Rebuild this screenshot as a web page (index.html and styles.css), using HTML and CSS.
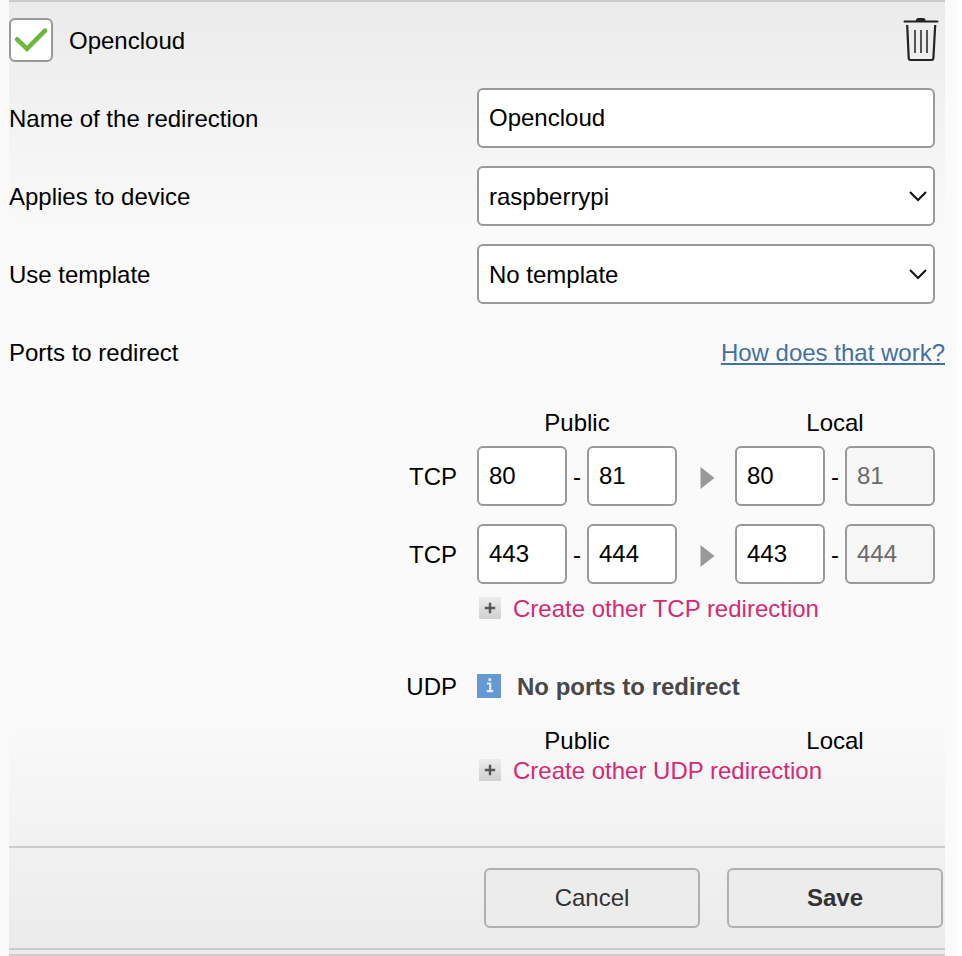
FILE: index.html
```html
<!DOCTYPE html>
<html lang="en">
<head>
<meta charset="utf-8">
<title>Port redirection</title>
<link rel="stylesheet" href="styles.css">
</head>
<body>
<main class="page">
<form class="panel">
  <header class="head">
    <span class="check"><svg width="34" height="26" viewBox="0 0 34 26"><path d="M3.2 12.3 13 21.8 31 3.6" fill="none" stroke="#6cb83c" stroke-width="4.6" stroke-linecap="round"/></svg></span>
    <span class="title">Opencloud</span>
    <svg class="trash" width="36" height="45" viewBox="0 0 36 45" fill="none">
      <path d="M13 4V3Q13 1 15.5 1H20Q22.5 1 22.5 3V4Z" fill="#222"/>
      <path d="M1.6 4.5H34.4" stroke="#222" stroke-width="2.2" stroke-linecap="round"/>
      <path d="M4.2 8 5.7 41Q5.8 43 7.7 43H28.5Q30.3 43 30.4 41L32.2 8" stroke="#222" stroke-width="2.2"/>
      <path d="M12 13V36M18 13V36M24 13V36" stroke="#555" stroke-width="2"/>
    </svg>
  </header>
  <div class="row"><span class="label">Name of the redirection</span><span class="field wide">Opencloud</span></div>
  <div class="row"><span class="label">Applies to device</span><span class="field wide select">raspberrypi<svg width="20" height="12" viewBox="0 0 20 12"><path d="M2 2 10 10 18 2" fill="none" stroke="#111" stroke-width="2"/></svg></span></div>
  <div class="row"><span class="label">Use template</span><span class="field wide select">No template<svg width="20" height="12" viewBox="0 0 20 12"><path d="M2 2 10 10 18 2" fill="none" stroke="#111" stroke-width="2"/></svg></span></div>
  <div class="row"><span class="label">Ports to redirect</span><a class="help">How does that work?</a></div>
  <section class="ports">
    <div class="heads"><span>Public</span><span>Local</span></div>
    <div class="port"><span class="proto">TCP</span><span class="field">80</span><i class="dash">-</i><span class="field">81</span><svg class="arrow" width="15" height="22" viewBox="0 0 15 22"><path d="M.5 0 14.5 11 .5 22Z" fill="#999"/></svg><span class="field">80</span><i class="dash">-</i><span class="field off">81</span></div>
    <div class="port"><span class="proto">TCP</span><span class="field">443</span><i class="dash">-</i><span class="field">444</span><svg class="arrow" width="15" height="22" viewBox="0 0 15 22"><path d="M.5 0 14.5 11 .5 22Z" fill="#999"/></svg><span class="field">443</span><i class="dash">-</i><span class="field off">444</span></div>
    <div class="create"><svg class="plus" width="22" height="22" viewBox="0 0 22 22"><path d="M5.8 11H16.2M11 5.8V16.2" stroke="#555" stroke-width="2.4"/></svg>Create other TCP redirection</div>
    <div class="udp"><span class="proto">UDP</span><svg class="info" width="24" height="24" viewBox="0 0 24 24"><path d="M0 0H24V24H0Z" fill="#6599d3"/><path d="M10 9.5H13.2V17M9.8 17.2H16.2" fill="none" stroke="#e4eefa" stroke-width="2.2"/><path d="M11.5 4.3H14.2V7H11.5Z" fill="#e4eefa"/></svg><b>No ports to redirect</b></div>
    <div class="heads low"><span>Public</span><span>Local</span></div>
    <div class="create last"><svg class="plus" width="22" height="22" viewBox="0 0 22 22"><path d="M5.8 11H16.2M11 5.8V16.2" stroke="#555" stroke-width="2.4"/></svg>Create other UDP redirection</div>
  </section>
  <footer class="actions"><button type="button">Cancel</button><button type="button" class="save">Save</button></footer>
</form>
<div class="next"></div>
</main>
</body>
</html>
```
FILE: styles.css
```css
* { box-sizing: border-box; }
body { margin: 0; background: #fff; overflow: hidden; }
.page {
  width: 957px; height: 956px; padding: 0 12px 0 9px;
  background: #fafafa; color: #000;
  font: 24px/30px "Liberation Sans", Arial, sans-serif;
}
svg { display: block; flex: none; }
.panel {
  height: 950px; display: flex; flex-direction: column;
  border-top: 2px solid #ccc; border-bottom: 2px solid #ccc;
  background: linear-gradient(#ebebeb, #fafafa 25%, #fafafa 75%, #ebebeb);
}
.head { height: 77px; display: flex; align-items: center; padding-right: 6px; }
.check {
  width: 44px; height: 44px; margin: 0 16px 1px 0;
  display: flex; align-items: center; justify-content: center;
  background: #fff; border: 2px solid #999; border-radius: 6px;
}
.trash { margin: 0 0 2px auto; }
.row { height: 78px; display: flex; align-items: center; }
.label { width: 468px; padding-top: 2px; }
.field {
  width: 90px; height: 60px; padding: 0 10px; flex: none;
  display: flex; align-items: center;
  background: #fff; border: 2px solid #999; border-radius: 6px;
}
.wide { width: 458px; }
.select { justify-content: space-between; padding: 2px 5px 0 10px; }
.select svg { margin-bottom: 2px; }
.off { background: #f6f6f6; color: #6b6b6b; }
.help { margin-left: auto; padding-top: 2px; color: #44719f; text-decoration: underline; }
.ports { flex: 1; }
.heads { display: grid; grid-template-columns: 200px 200px; column-gap: 58px; margin: 17px 0 8px 468px; text-align: center; }
.port { display: flex; align-items: center; height: 60px; margin-bottom: 18px; }
.proto { width: 448px; margin-right: 20px; text-align: right; }
.port .proto, .dash { padding-top: 2px; }
.dash { width: 20px; text-align: center; font-style: normal; }
.arrow { margin: 4px 20px 0 23px; }
.create { display: flex; align-items: center; height: 30px; margin: -8px 0 0 470px; gap: 12px; color: #d42a74; }
.plus { margin-bottom: 2px; background: linear-gradient(#ececec, #d0d0d0); border-radius: 1px; }
.udp { display: flex; align-items: center; height: 30px; margin-top: 48px; }
.info { margin-bottom: 2px; }
.udp b { margin-left: 16px; color: #484848; }
.heads.low { margin-top: 24px; margin-bottom: 0; }
.create.last { margin-top: 0; }
.actions {
  height: 102px; padding: 20px 2px 0 0;
  display: flex; justify-content: flex-end; gap: 27px;
  border-top: 2px solid #ccc;
}
button {
  width: 216px; height: 60px; padding: 0;
  font: inherit; color: #333;
  background: #ececec; border: 2px solid #b0b0b0; border-radius: 6px;
}
.save { font-weight: bold; }
.next { height: 6px; background: #ebebeb; border-bottom: 2px solid #ccc; }
```
